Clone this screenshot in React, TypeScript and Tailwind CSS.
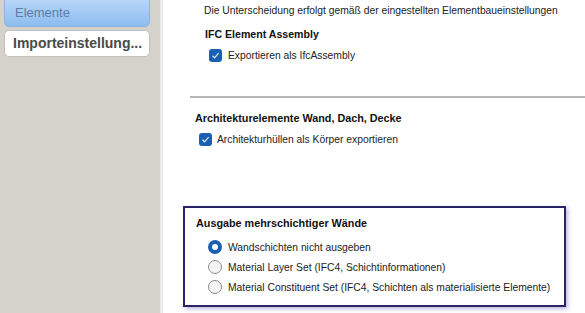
const font = { fontFamily: '"Liberation Sans", Arial, sans-serif' };

const CheckBox = () => (
  <span className="flex h-[13px] w-[13px] items-center justify-center rounded-[3px] bg-[#1a5fb4]">
    <svg width="9" height="9" viewBox="0 0 9 9">
      <path d="M1.5 4.8 L3.6 6.8 L7.6 2.2" fill="none" stroke="#dfe9f7" strokeWidth="1.2" />
    </svg>
  </span>
);

const Radio = ({ checked }: { checked?: boolean }) =>
  checked ? (
    <span className="flex h-[14px] w-[14px] shrink-0 items-center justify-center rounded-full bg-[#1a5fb4]">
      <span className="h-[6px] w-[6px] rounded-full bg-white" />
    </span>
  ) : (
    <span className="h-[14px] w-[14px] shrink-0 rounded-full border border-[#8d8d8d] bg-[#f4f4f4]" />
  );

export default function App() {
  return (
    <div className="flex h-[313px] w-[585px] overflow-hidden bg-white text-[10.3px] leading-[13px] text-[#222]" style={font}>
      <aside className="flex w-[160px] shrink-0 flex-col gap-[3px] bg-[#d5d2cb] pl-[4px] pr-[10px]">
        <div className="-mt-[3px] flex h-[30px] items-center rounded-[5px] border border-[#8fb3dc] bg-gradient-to-b from-[#bcd8f7] to-[#8cbcf0] pl-[10px] text-[13px] text-[#5a7ca6]">
          Elemente
        </div>
        <div className="flex h-[27px] items-center rounded-[5px] border border-[#c4c1ba] bg-white pl-[8px] text-[14px] font-bold text-[#4a4a4a]">
          Importeinstellung...
        </div>
      </aside>
      <main className="flex flex-1 flex-col border-l-[3px] border-[#ecebe8]">
        <div className="-mt-[10px] ml-[41px] h-[13px] text-[#444]">Ist</div>
        <div className="ml-[41px] mt-[1px]">
          Die Unterscheidung erfolgt gemäß der eingestellten Elementbaueinstellungen
        </div>
        <div className="ml-[42px] mt-[11px] text-[10.6px] font-bold text-[#111]">IFC Element Assembly</div>
        <div className="ml-[46px] mt-[8px] flex h-[13px] items-center gap-[6px]">
          <CheckBox />
          <span>Exportieren als IfcAssembly</span>
        </div>
        <div className="ml-[27px] mt-[34px] h-[2px] bg-[#b4b4b4]" />
        <div className="ml-[32px] mt-[14px] text-[10.8px] font-bold text-[#111]">Architekturelemente Wand, Dach, Decke</div>
        <div className="ml-[36px] mt-[8px] flex h-[13px] items-center gap-[5px]">
          <CheckBox />
          <span>Architekturhüllen als Körper exportieren</span>
        </div>
        <div className="ml-[20px] mt-[60px] flex h-[101px] w-[383px] flex-col border-2 border-[#2a2367] pl-[11px] shadow-[2px_2px_4px_rgba(90,80,170,0.4)]">
          <div className="mt-[9px] text-[10.8px] font-bold text-[#111]">Ausgabe mehrschichtiger Wände</div>
          <div className="ml-[12px] mt-[10px] flex flex-col gap-[6px]">
            <div className="flex h-[14px] items-center gap-[6px]">
              <Radio checked />
              <span>Wandschichten nicht ausgeben</span>
            </div>
            <div className="flex h-[14px] items-center gap-[6px]">
              <Radio />
              <span>Material Layer Set (IFC4, Schichtinformationen)</span>
            </div>
            <div className="flex h-[14px] items-center gap-[6px]">
              <Radio />
              <span>Material Constituent Set (IFC4, Schichten als materialisierte Elemente)</span>
            </div>
          </div>
        </div>
      </main>
    </div>
  );
}
